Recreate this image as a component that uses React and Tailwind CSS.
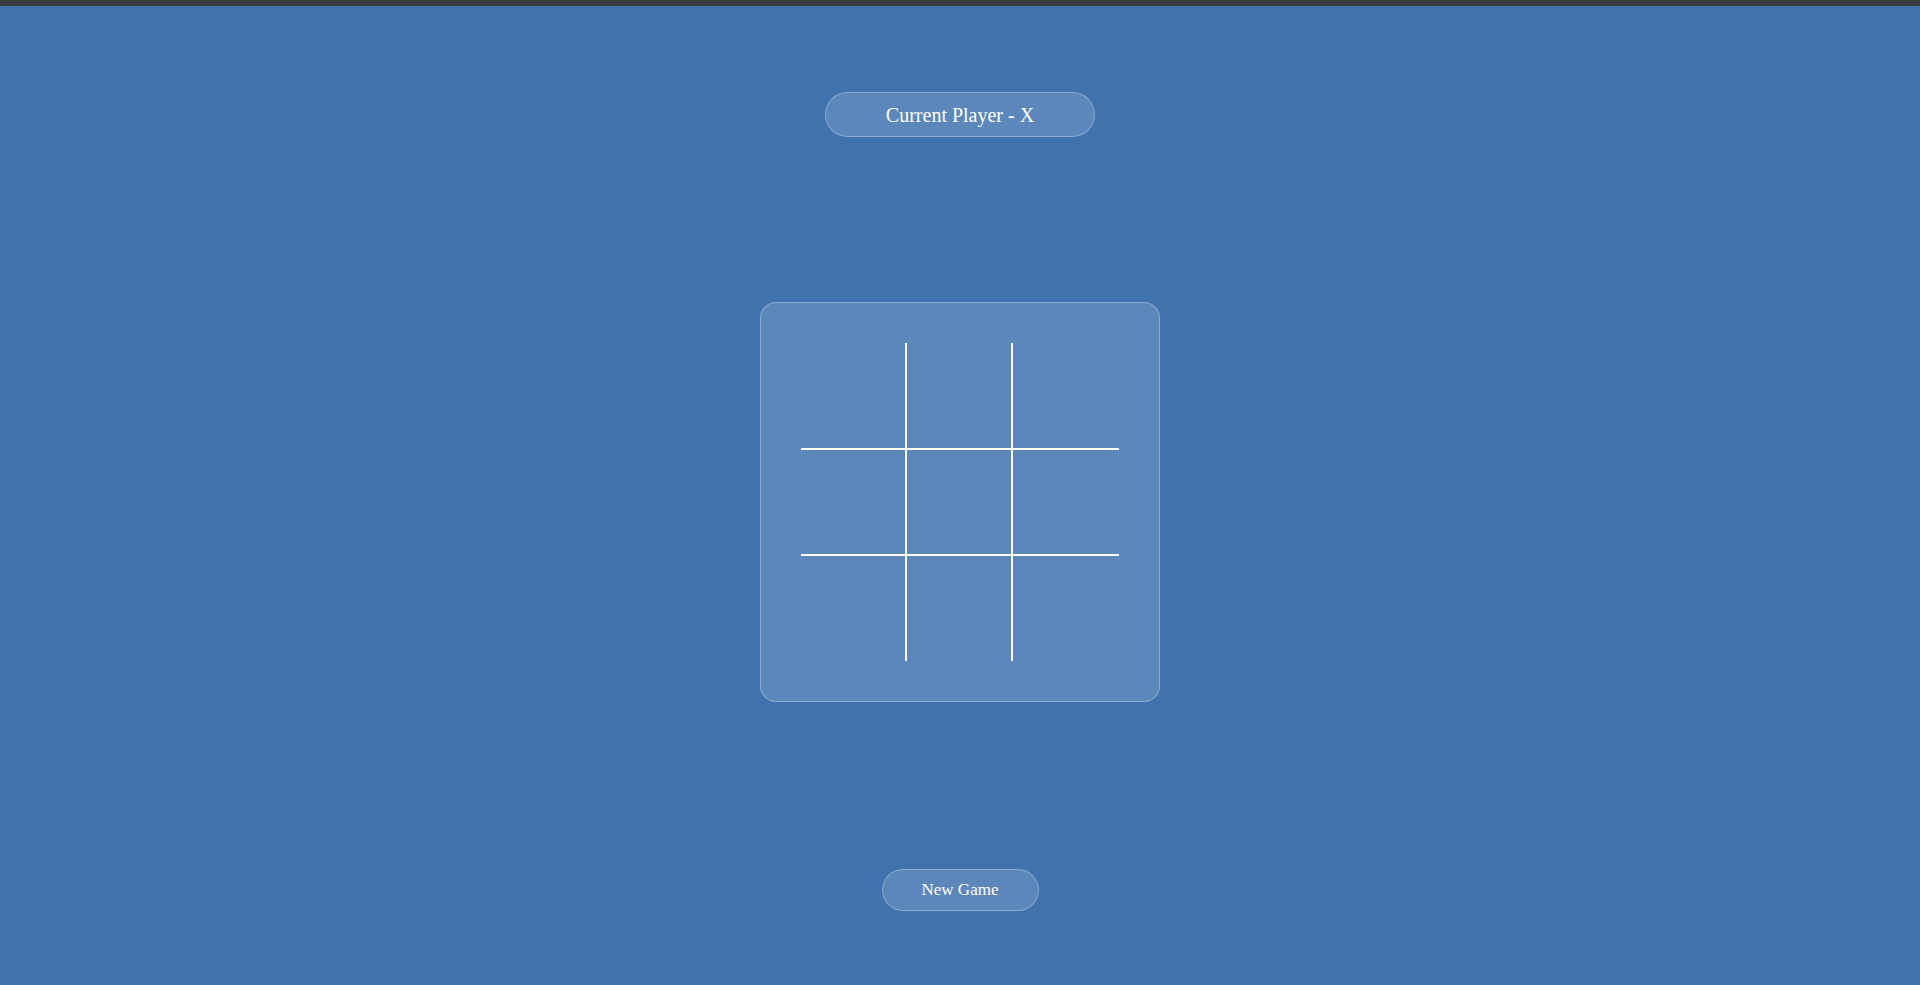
import React, { useState } from 'react';

// ── Tic tac toe board ─────────────────────────────────────────────────────────
const cellBorders = [
  'border-r-2 border-b-2', 'border-r-2 border-b-2', 'border-b-2',
  'border-r-2 border-b-2', 'border-r-2 border-b-2', 'border-b-2',
  'border-r-2', 'border-r-2', '',
];

export default function App() {
  const [cells, setCells] = useState(Array(9).fill(null));
  const [player, setPlayer] = useState('X');

  const play = i => {
    if (cells[i]) return;
    const next = cells.slice();
    next[i] = player;
    setCells(next);
    setPlayer(player === 'X' ? 'O' : 'X');
  };

  const reset = () => { setCells(Array(9).fill(null)); setPlayer('X'); };

  return (
    <div className="h-screen overflow-hidden flex flex-col" style={{ fontFamily: '"Liberation Serif", "Times New Roman", serif' }}>
      <div className="h-[6px] shrink-0 bg-[#3b3b3b]" />
      <div className="flex-1 bg-[#4072ae] flex flex-col items-center pt-[86px] text-white">
        {/* Status */}
        <div className="w-[270px] h-[45px] rounded-full bg-white/15 border border-white/30 flex items-center justify-center text-[20px]">
          Current Player - {player}
        </div>

        {/* Board */}
        <div className="mt-[165px] w-[400px] h-[400px] rounded-2xl bg-white/15 border border-white/30 flex items-center justify-center">
          <div className="grid grid-cols-3 w-[318px] h-[318px]">
            {cells.map((c, i) => (
              <button key={i} onClick={() => play(i)}
                className={`border-white flex items-center justify-center text-[56px] leading-none ${cellBorders[i]}`}>
                {c}
              </button>
            ))}
          </div>
        </div>

        {/* Actions */}
        <button onClick={reset}
          className="mt-[167px] w-[157px] h-[42px] rounded-full bg-white/15 border border-white/30 text-[17px] text-white">
          New Game
        </button>
      </div>
    </div>
  );
}
